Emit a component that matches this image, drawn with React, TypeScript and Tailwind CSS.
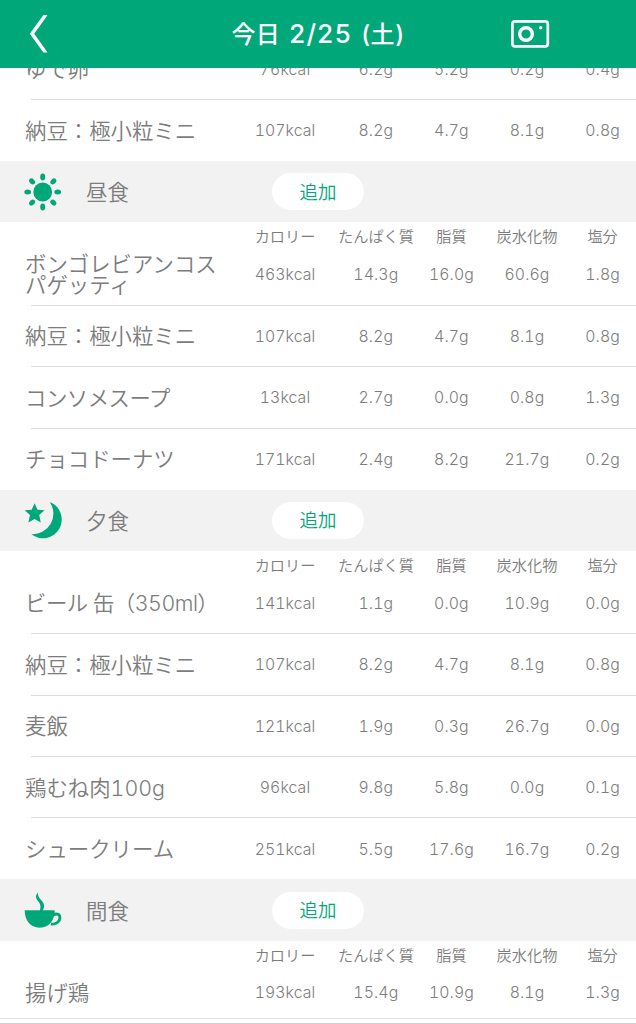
import React from "react";

interface Food {
    name: string;
    /** calories, protein, fat, carbs, salt */
    values: string[];
    condensed?: boolean;
}

interface Meal {
    title: string;
    icon: React.ReactNode;
    foods: Food[];
}

const NUTRIENTS = ["カロリー", "たんぱく質", "脂質", "炭水化物", "塩分"];

const RAY_ANGLES = [0, 45, 90, 135, 180, 225, 270, 315];

function SunIcon() {
    return (
        <svg viewBox="0 0 38 38" className="size-[38px] fill-[#00a879]">
            <circle cx="18.7" cy="19" r="9.4" />
            {RAY_ANGLES.map((angle) => (
                <ellipse
                    key={angle}
                    cx="18.7"
                    cy="4"
                    rx="2.5"
                    ry="3.4"
                    transform={`rotate(${angle} 18.7 19)`}
                />
            ))}
        </svg>
    );
}

function MoonIcon() {
    return (
        <svg viewBox="0 0 38 38" className="size-[38px] fill-[#00a879]">
            <path d="M25.7 .9A18.8 18.8 0 1 1 7.3 33.2A20.6 20.6 0 0 0 25.7 .9Z" />
            <path d="M10.6 2.2L13.5 8.7L20.5 9.3L15.2 13.9L16.8 21.6L10.6 18L4.4 21.6L6 13.9L.7 9.3L7.7 8.7Z" />
        </svg>
    );
}

function CupIcon() {
    return (
        <svg viewBox="0 0 38 38" className="size-[38px] fill-[#00a879]">
            <path d="M.7 19.3H30.7C30.7 29 25.5 36.7 15.7 36.7S.7 29 .7 19.3Z" />
            <path
                d="M29.4 24C31.2 22.6 35.9 22.2 35.9 26.4C35.9 30.8 31.4 33.8 27 32.9"
                fill="none"
                stroke="#00a879"
                strokeWidth="2.9"
            />
            <path d="M13.7 1.4C11.2 4.6 11.8 7.4 14 10C16.5 13 17.2 15.5 15.7 20H18.6C20.8 15.7 20.6 12.7 17.5 9.4C14.7 6.5 14 4.8 13.7 1.4Z" />
        </svg>
    );
}

const natto: Food = {
    name: "納豆：極小粒ミニ",
    values: ["107kcal", "8.2g", "4.7g", "8.1g", "0.8g"],
};

const breakfast: Food[] = [
    { name: "ゆで卵", values: ["76kcal", "6.2g", "5.2g", "0.2g", "0.4g"] },
    natto,
];

const meals: Meal[] = [
    {
        title: "昼食",
        icon: <SunIcon />,
        foods: [
            {
                name: "ボンゴレビアンコスパゲッティ",
                values: ["463kcal", "14.3g", "16.0g", "60.6g", "1.8g"],
            },
            natto,
            {
                name: "コンソメスープ",
                values: ["13kcal", "2.7g", "0.0g", "0.8g", "1.3g"],
                condensed: true,
            },
            { name: "チョコドーナツ", values: ["171kcal", "2.4g", "8.2g", "21.7g", "0.2g"] },
        ],
    },
    {
        title: "夕食",
        icon: <MoonIcon />,
        foods: [
            {
                name: "ビール 缶（350ml）",
                values: ["141kcal", "1.1g", "0.0g", "10.9g", "0.0g"],
                condensed: true,
            },
            natto,
            { name: "麦飯", values: ["121kcal", "1.9g", "0.3g", "26.7g", "0.0g"] },
            { name: "鶏むね肉100g", values: ["96kcal", "9.8g", "5.8g", "0.0g", "0.1g"] },
            { name: "シュークリーム", values: ["251kcal", "5.5g", "17.6g", "16.7g", "0.2g"] },
        ],
    },
    {
        title: "間食",
        icon: <CupIcon />,
        foods: [{ name: "揚げ鶏", values: ["193kcal", "15.4g", "10.9g", "8.1g", "1.3g"] }],
    },
];

function FoodList({ foods }: { foods: Food[] }) {
    return (
        <ul className="pb-[0.6px]">
            {foods.map((food, index) => (
                <li key={food.name}>
                    {index > 0 ? <div className="ml-[31px] h-px bg-[#dcdcdc]" /> : null}
                    <div
                        className={`grid grid-cols-[207px_106px_repeat(4,75.6px)] items-center pt-[2px] pl-[25px] ${
                            index > 0 ? "h-[60.4px]" : "h-[61.4px]"
                        }`}
                    >
                        <span
                            className={`w-[204px] text-[21.4px] leading-[21.5px] break-all tabular-nums ${
                                food.condensed ? "tracking-[-0.5px]" : "tracking-normal"
                            }`}
                        >
                            {food.name}
                        </span>
                        {food.values.map((value, column) => (
                            <span
                                key={column}
                                className="text-center text-[15.8px] leading-6 tracking-[0.1px] tabular-nums"
                            >
                                {value}
                            </span>
                        ))}
                    </div>
                </li>
            ))}
        </ul>
    );
}

function MealSection({ meal }: { meal: Meal }) {
    return (
        <section>
            <div className="flex h-[61.2px] items-center bg-[#f2f2f2] pl-6">
                {meal.icon}
                <h2 className="ml-6 w-[186px] pt-px text-[21.4px] leading-8">{meal.title}</h2>
                <button
                    type="button"
                    className="h-[37px] w-[92px] rounded-full bg-white pt-0.5 text-[18.5px] text-[#00a879]"
                >
                    追加
                </button>
            </div>
            <div className="grid h-[21.1px] grid-cols-[207px_106px_repeat(4,75.6px)] pl-[25px]">
                <span />
                {NUTRIENTS.map((label) => (
                    <span
                        key={label}
                        className="text-center text-[15.2px] leading-[29px] whitespace-nowrap"
                    >
                        {label}
                    </span>
                ))}
            </div>
            <FoodList foods={meal.foods} />
        </section>
    );
}

export default function App() {
    return (
        <div className="flex h-[1024px] w-[636px] flex-col overflow-hidden bg-white font-['Inter','Noto_Sans_CJK_JP',sans-serif] font-[350] text-[#7c7c7c]">
            <header className="z-10 grid h-[68px] shrink-0 grid-cols-[204px_228px_204px] items-center bg-[#00a879] text-white">
                <svg viewBox="0 0 20 40" className="ml-[29px] h-10 w-5" fill="currentColor">
                    <path d="M14.4 1H18.6L5.2 19.8L18.6 38.4H14.4L.8 19.8Z" />
                </svg>
                <h1 className="text-center text-[24px] leading-9 font-medium tracking-[0.3px] whitespace-nowrap tabular-nums [word-spacing:2px]">
                    今日 <span className="text-[26px] tracking-[0.8px]">2/25</span> (土)
                </h1>
                <svg
                    viewBox="0 0 40 30"
                    className="ml-[78px] h-[30px] w-10"
                    fill="none"
                    stroke="currentColor"
                >
                    <rect x="2.4" y="2.4" width="35.4" height="25" rx="2.6" strokeWidth="2.7" />
                    <circle cx="16" cy="15" r="6.3" strokeWidth="3.4" />
                    <circle cx="30.7" cy="8.8" r="1.7" fill="currentColor" stroke="none" />
                </svg>
            </header>
            <main className="min-h-0 flex-1 overflow-hidden">
                <div className="-mt-[30.2px]">
                    <FoodList foods={breakfast} />
                    {meals.map((meal) => (
                        <MealSection key={meal.title} meal={meal} />
                    ))}
                    <div className="-mt-[6px] h-px bg-[#e2e2e2]" />
                    <div className="mt-1 h-0.5 bg-[#d0d0d0]" />
                </div>
            </main>
        </div>
    );
}
